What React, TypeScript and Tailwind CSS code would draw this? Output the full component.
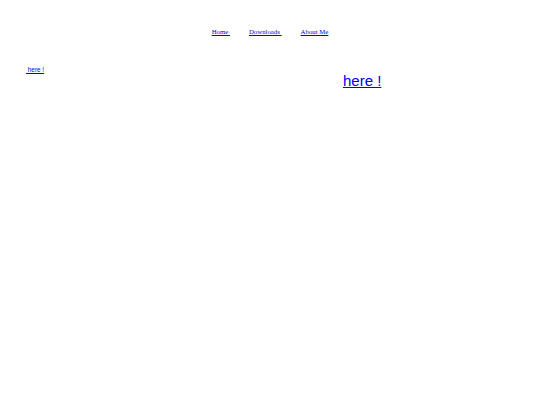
export default function App() {
  return (
    <div className="w-[540px] h-[405px] bg-white">
      {/* nav */}
      <nav className="pt-[28px] flex justify-center gap-[19px] text-[6.8px] leading-[8px] font-['Liberation_Serif',serif] text-[#0000ee]">
        <a href="#" className="underline whitespace-pre">Home </a>
        <a href="#" className="underline whitespace-pre">Downloads </a>
        <a href="#" className="underline whitespace-pre">About Me</a>
      </nav>

      <div className="flex items-start mt-[28px]">
        <a
          href="#"
          className="ml-[26px] mt-[2px] w-[18px] shrink-0 underline whitespace-pre text-[6.4px] leading-[8px] font-['Liberation_Sans',sans-serif] text-[#0000ee]"
        >
          {' here !'}
        </a>
        <a
          href="#"
          className="ml-[299px] mt-[8px] underline whitespace-pre text-[15px] leading-[17px] font-['Liberation_Sans',sans-serif] text-[#0000ee]"
        >
          here !
        </a>
      </div>
    </div>
  );
}
